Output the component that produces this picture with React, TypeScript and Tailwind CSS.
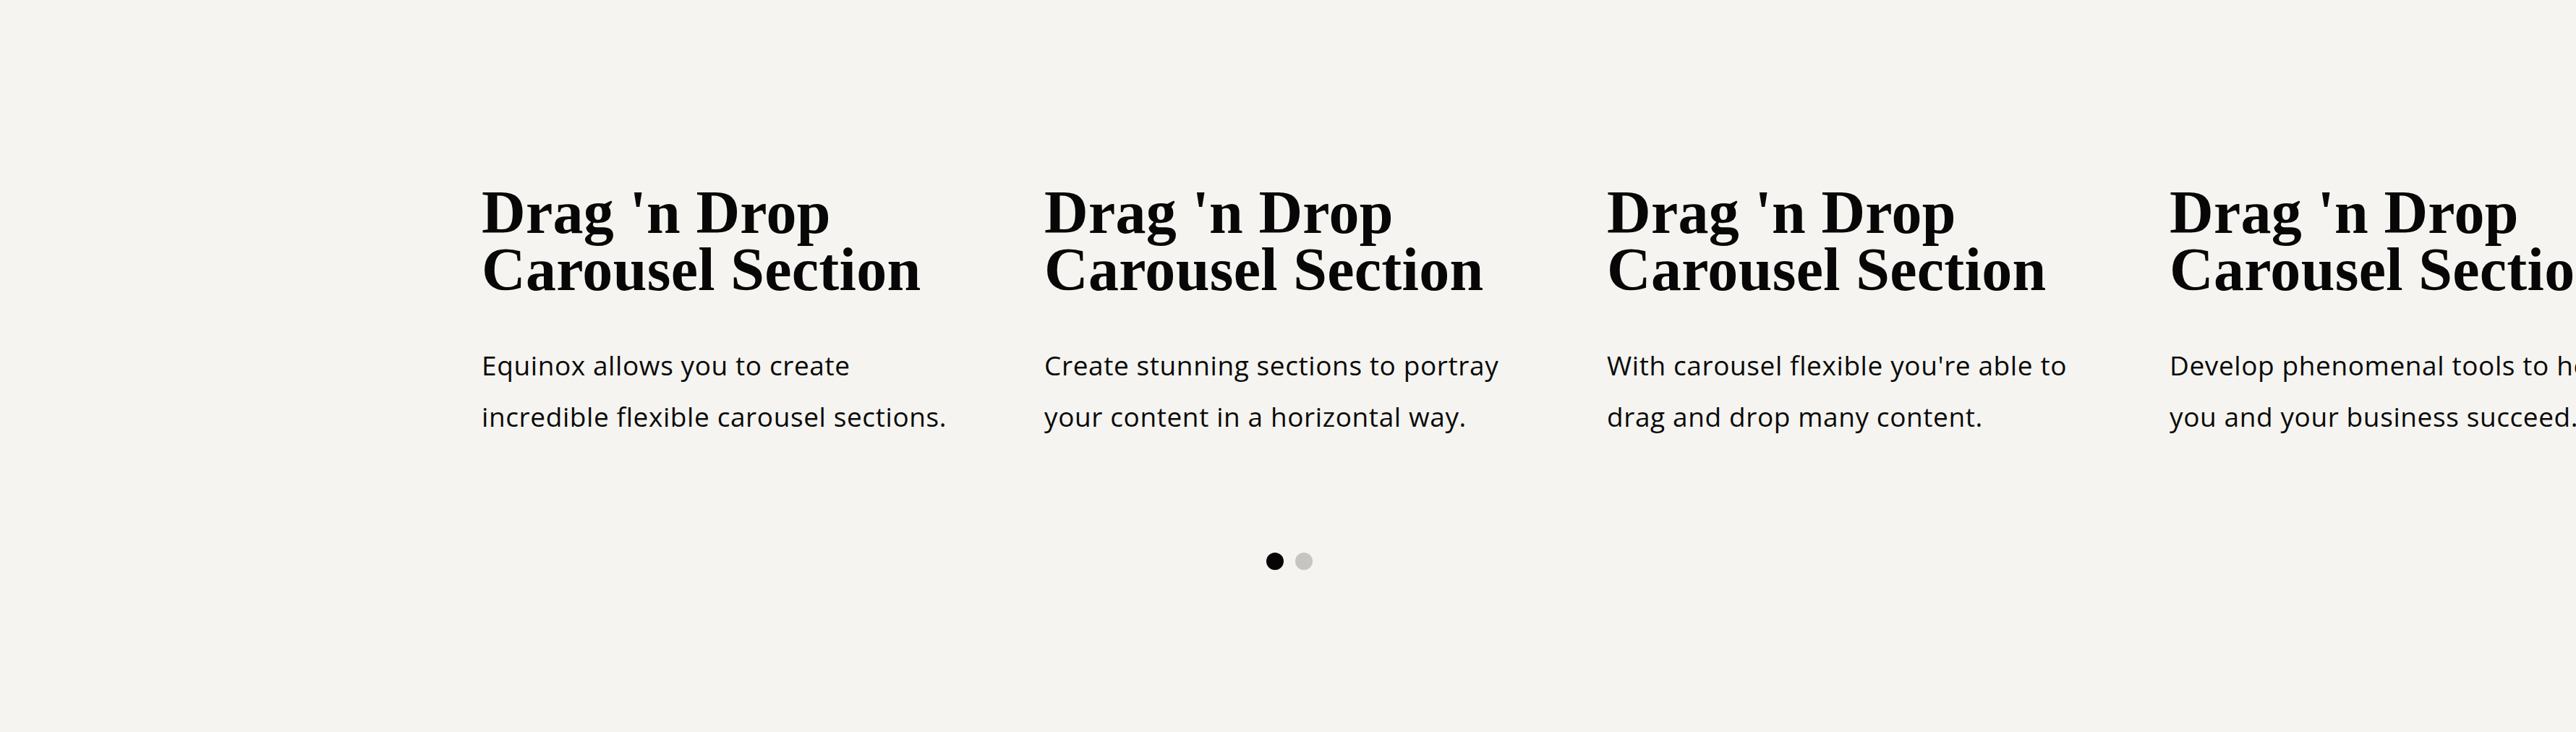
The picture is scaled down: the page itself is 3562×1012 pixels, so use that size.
const SLIDES = [
  { title: ["Drag 'n Drop", 'Carousel Section'], body: ['Equinox allows you to create', 'incredible flexible carousel sections.'] },
  { title: ["Drag 'n Drop", 'Carousel Section'], body: ['Create stunning sections to portray', 'your content in a horizontal way.'] },
  { title: ["Drag 'n Drop", 'Carousel Section'], body: ["With carousel flexible you're able to", 'drag and drop many content.'] },
  { title: ["Drag 'n Drop", 'Carousel Section'], body: ['Develop phenomenal tools to help', 'you and your business succeed.'] },
]

export default function App() {
  return (
    <div className="w-full h-[1012px] bg-[#f5f4f0] overflow-hidden pt-[254px]">
      <div className="flex pl-[666px]">
        {SLIDES.map((s, i) => (
          <div key={i} className="w-[778px] shrink-0">
            <h2 className="font-['Liberation_Serif',serif] font-bold text-[84px] leading-[79px] tracking-[0.3px] text-[#070707] whitespace-nowrap">
              {s.title.map(t => <div key={t}>{t}</div>)}
            </h2>
            <div className="mt-[57px] font-['Open_Sans',sans-serif] text-[37px] leading-[71px] tracking-[0.6px] text-[#0a0a0a] whitespace-nowrap">
              {s.body.map(t => <div key={t}>{t}</div>)}
            </div>
          </div>
        ))}
      </div>
      <div className="flex justify-center gap-4 mt-[153px] pl-[3px]">
        <span className="w-6 h-6 rounded-full bg-[#050505]" />
        <span className="w-6 h-6 rounded-full bg-[#c6c5c2]" />
      </div>
    </div>
  )
}
